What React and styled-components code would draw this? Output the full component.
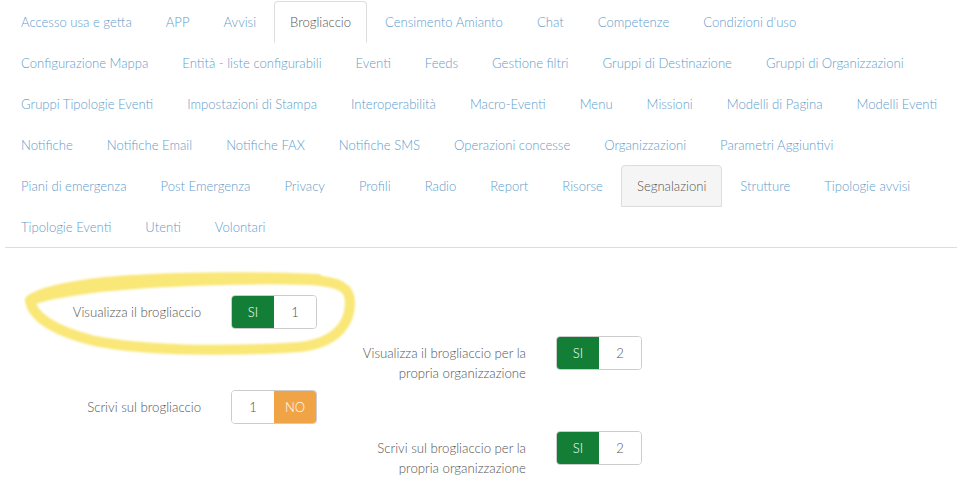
import React from "react";
import styled, { createGlobalStyle } from "styled-components";

const Global = createGlobalStyle`
  html, body { margin: 0; padding: 0; background: #fff; }
  body {
    font-family: Lato, "Liberation Sans", Arial, sans-serif;
    font-size: 13px;
    font-weight: 300;
    line-height: 20px;
    color: #555;
  }
  * { box-sizing: border-box; }
`;

const Page = styled.div`
  position: relative;
  width: 968px;
  height: 493px;
  padding: 1px 11px 0 5px;
  overflow: hidden;
`;

const Tabs = styled.ul`
  display: flex;
  flex-wrap: wrap;
  list-style: none;
  margin: 0;
  padding: 0;
  border-bottom: 1px solid #ddd;
`;

const TabItem = styled.li`
  margin: 0 2px -1px 0;
`;

const TabLink = styled.a`
  display: block;
  padding: 10px 15px;
  line-height: 20px;
  font-size: 13.1px;
  font-weight: 300;
  text-decoration: none;
  white-space: nowrap;
  border: 1px solid transparent;
  border-radius: 4px 4px 0 0;
  color: ${(p) => (p.$state ? "#555" : "#5f9ccb")};
  background: ${(p) => (p.$state === "hover" ? "#f5f5f5" : "transparent")};
  border-color: ${(p) =>
    p.$state === "active"
      ? "#ddd #ddd transparent #ddd"
      : p.$state === "hover"
      ? "#ddd"
      : "transparent"};
`;

const Form = styled.div`
  padding: 47px 0 0 21px;
`;

const FormRow = styled.div`
  display: grid;
  grid-template-columns: 325px 325px;
  align-items: start;
  margin-bottom: 7px;
`;

const Field = styled.div`
  display: flex;
  align-items: flex-start;
  margin-top: ${(p) => (p.$shift ? "41px" : "0")};
`;

const Label = styled.label`
  width: 175px;
  padding-top: 7px;
  margin-right: 30px;
  text-align: right;
  font-size: 13.2px;
  line-height: 20px;
  color: #555;
`;

const Toggle = styled.div`
  display: flex;
  width: 86px;
  height: 34px;
  border: 1px solid #ccc;
  border-radius: 4px;
  overflow: hidden;
`;

const Segment = styled.div`
  flex: 1;
  display: flex;
  align-items: center;
  justify-content: center;
  font-size: 13px;
  color: ${(p) => (p.$tone ? "#fff" : "#555")};
  background: ${(p) =>
    p.$tone === "yes" ? "#137f36" : p.$tone === "no" ? "#f0a446" : "#fff"};
`;

const Annotation = styled.svg`
  position: absolute;
  left: 0;
  top: 0;
  pointer-events: none;
`;

const tabs = [
  "Accesso usa e getta", "APP", "Avvisi", "Brogliaccio", "Censimento Amianto", "Chat",
  "Competenze", "Condizioni d'uso", "Configurazione Mappa", "Entità - liste configurabili",
  "Eventi", "Feeds", "Gestione filtri", "Gruppi di Destinazione", "Gruppi di Organizzazioni",
  "Gruppi Tipologie Eventi", "Impostazioni di Stampa", "Interoperabilità", "Macro-Eventi",
  "Menu", "Missioni", "Modelli di Pagina", "Modelli Eventi", "Notifiche", "Notifiche Email",
  "Notifiche FAX", "Notifiche SMS", "Operazioni concesse", "Organizzazioni",
  "Parametri Aggiuntivi", "Piani di emergenza", "Post Emergenza", "Privacy", "Profili",
  "Radio", "Report", "Risorse", "Segnalazioni", "Strutture", "Tipologie avvisi",
  "Tipologie Eventi", "Utenti", "Volontari",
];

const stateOf = (t) =>
  t === "Brogliaccio" ? "active" : t === "Segnalazioni" ? "hover" : undefined;

function Switch({ left, right }) {
  return (
    <Toggle>
      <Segment $tone={left.tone}>{left.text}</Segment>
      <Segment $tone={right.tone}>{right.text}</Segment>
    </Toggle>
  );
}

export default function App() {
  return (
    <>
      <Global />
      <Page>
        <Tabs>
          {tabs.map((t) => (
            <TabItem key={t}>
              <TabLink href="#" $state={stateOf(t)} onClick={(e) => e.preventDefault()}>
                {t}
              </TabLink>
            </TabItem>
          ))}
        </Tabs>
        <Form>
          <FormRow>
            <Field>
              <Label>Visualizza il brogliaccio</Label>
              <Switch left={{ text: "SI", tone: "yes" }} right={{ text: "1" }} />
            </Field>
            <Field $shift>
              <Label>Visualizza il brogliaccio per la propria organizzazione</Label>
              <Switch left={{ text: "SI", tone: "yes" }} right={{ text: "2" }} />
            </Field>
          </FormRow>
          <FormRow>
            <Field>
              <Label>Scrivi sul brogliaccio</Label>
              <Switch left={{ text: "1" }} right={{ text: "NO", tone: "no" }} />
            </Field>
            <Field $shift>
              <Label>Scrivi sul brogliaccio per la propria organizzazione</Label>
              <Switch left={{ text: "SI", tone: "yes" }} right={{ text: "2" }} />
            </Field>
          </FormRow>
        </Form>
        <Annotation width="968" height="493" viewBox="0 0 968 493">
          <defs>
            <filter id="soft" x="-10%" y="-10%" width="120%" height="120%">
              <feGaussianBlur stdDeviation="1.2" />
            </filter>
          </defs>
          <path
            d="M 318 279 C 250 276, 160 277, 105 282 C 70 286, 40 292, 30 300 C 32 315, 50 330, 95 341 C 150 352, 240 351, 300 347 C 335 343, 350 325, 350 302 C 350 288, 340 282, 312 280 C 250 278, 160 281, 100 287 C 60 292, 40 296, 30 301"
            fill="none"
            stroke="#f8e468"
            strokeOpacity="0.9"
            strokeWidth="10"
            strokeLinecap="round"
            strokeLinejoin="round"
            filter="url(#soft)"
          />
        </Annotation>
      </Page>
    </>
  );
}
